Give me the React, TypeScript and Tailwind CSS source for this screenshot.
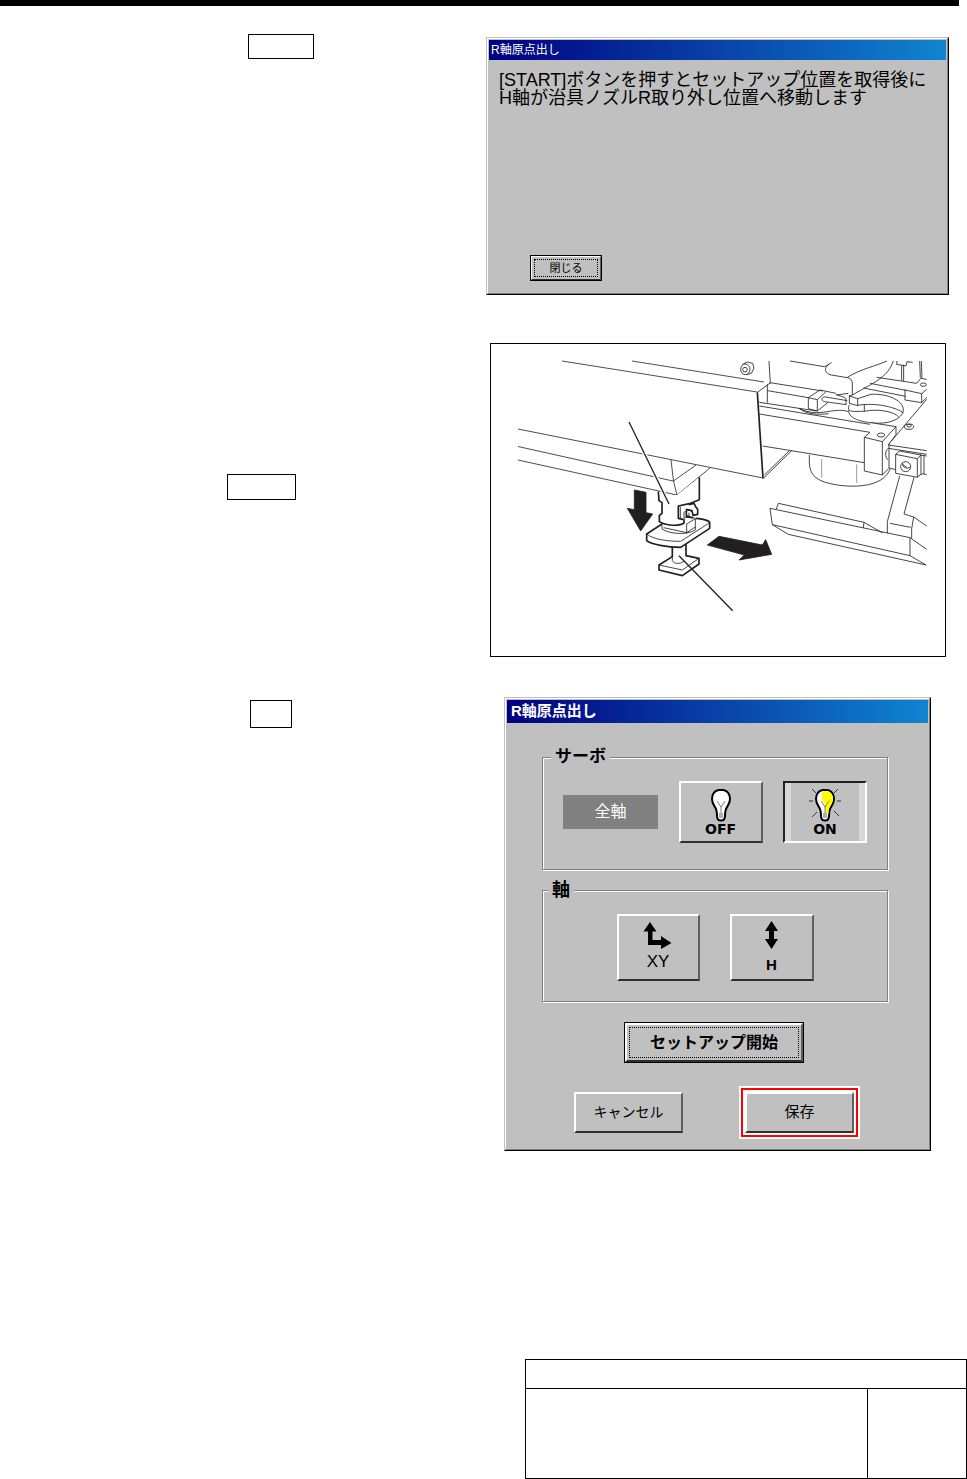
import type { ReactNode } from "react";

const bevel =
  "border-t-white border-l-white border-r-[#606060] border-b-[#303030] bg-[#c0c0c0] text-black";

const groupBox =
  "min-w-0 border border-[#808080] shadow-[1px_1px_0_#fff,inset_1px_1px_0_#fff]";

function DialogWindow({
  title,
  titleClass,
  className,
  children,
}: {
  title: string;
  titleClass: string;
  className: string;
  children: ReactNode;
}) {
  return (
    <section
      aria-label={title}
      className={`flex flex-col border border-t-[#c0c0c0] border-l-[#c0c0c0] border-r-black border-b-black bg-[#c0c0c0] ${className}`}
    >
      <div className="flex grow flex-col border border-t-white border-l-white border-r-[#808080] border-b-[#808080] p-px">
        <h2
          className={`flex items-center bg-linear-to-r/srgb from-[#000080] to-[#1084d0] text-white ${titleClass}`}
        >
          {title}
        </h2>
        {children}
      </div>
    </section>
  );
}

function KeyBox({ className }: { className: string }) {
  return <div className={`border border-black ${className}`} />;
}

function Bulb({ lit }: { lit: boolean }) {
  return (
    <svg width="36" height="34" viewBox="0 0 36 34" fill="none" aria-hidden="true">
      <path
        d="M15.500 2h5c4 1 6.500 4.500 6.500 9c0 4.500-2.500 6.500-4 10c-.8 2-1 4-1 7c0 3-1.500 4.500-4 4.500s-4-1.500-4-4.500c0-3-.2-5-1-7c-1.500-3.500-4-5.500-4-10c0-4.500 2.500-8 6.500-9z"
        fill="#fff"
        stroke="#000"
        strokeWidth="2"
      />
      {lit && (
        <path d="M15 4l2-1h3.500c3.500 1 5.500 4 5.500 8c0 4-3 6.500-4.500 11v4h-3.500v-9l-3-6z" fill="#ff0" />
      )}
      <path d="M14 13l4 6l4-6M18 18v7" stroke="#808080" strokeWidth="1" />
      <path d="M16 25h4v5h-4z" fill="#b0b0b0" />
      {lit && (
        <path
          d="M5 1l4 4M31 1l-4 4M2 13h4M30 13h4M5 29l5-5M32 28l-5-5"
          stroke="#333"
          strokeWidth="1"
        />
      )}
    </svg>
  );
}

function MachineDrawing() {
  return (
    <svg
      viewBox="491 344 454 312"
      className="block h-auto w-full"
      role="img"
      aria-label="H軸 治具ノズル"
      fill="none"
      stroke="#231f20"
      strokeWidth="0.8"
      strokeLinejoin="round"
    >
      <path d="M562 361L757 392M632 361L764 382M518 429L763 478M518 446.500L673 481M518 460L677 495" />
      <path d="M671 460l2.500 21l3.500 14l33-27M673.500 481L696 465" />
      <g transform="translate(720 340) scale(.33333)" strokeWidth="2.500">
        <path d="M147 63L151 130M112 157l40-29M142 133v55M118 187l172 26M150 128l158 25M143 152l122 21" />
        <path d="M112 157L129 415" strokeWidth="5" />
        <path d="M128 318L433 368M215 332L130 415M207 333L133 405" />
        <path d="M265 173l27 6v34l-27-7zM265 173l35-23l48 10M292 179l26-24M292 213l31-25" />
        <path d="M382 182l-65-11c-14-2-14 12-4 14l66 9M350 165l35-5M378 176v18M348 164c12 4 24 6 30 12" />
        <path d="M388 168l25 8v21l-25-7zM413 176l40-13c56-3 99 22 97 48c-3 25-40 42-90 38c-48-4-75-18-74-38M412 196c60-10 120 8 138 23M388 195c-12 25 18 18 45 19c40-9 91 1 103 17M433 192v22" />
        <path d="M236 205c52 26 88 5 123 6c9 0 17 1 27 4M118 198L450 253M118 222l332 55M240 207c20 15 50 18 86 14" />
        <path d="M210 63l103 17l14-6M335 68c-24 10-25 32-1 37l48 8c10 2 15 7 15 18v34l55-31c38-22 56-38 68-71M382 112c40-25 80-32 119-49M397 165l-10 3" />
        <path d="M450 130l108 21M470 112l120 18l12-15l18 3M430 144l127 25M555 150l50 11l15-13M555 150v30l50 8v-27M605 188l15-16" />
        <ellipse cx="610" cy="134" rx="9" ry="5" />
        <path d="M545 76v46M551 74v49M599 63l2 50M604 63l2 51M531 63l-1 10l28 5l3-13l17 2" />
        <path d="M620 178L505 314" />
        <ellipse cx="567" cy="260" rx="14" ry="8" />
        <ellipse cx="567" cy="257" rx="7" ry="4" />
        <path d="M450 277l-17 15l54 13v100l-54-12V292M487 305l41-45l-75-12M487 405l20-20V312l21-28v-24" fill="#fff" />
        <ellipse cx="483" cy="285" rx="11" ry="6" />
        <path d="M268 345v25c2 33 18 46 45 56c50 16 112 16 147 4c25-9 39-19 51-43" />
        <path d="M305 357v56M410 373v56" stroke="#888" />
        <path d="M505 315l115 17M505 325l115 18M505 325c-10 5-11 29-1 34M508 384l19 5M600 345l20 3M612 346v56l8 2M597 405l15-4" />
        <path d="M527 343l11-10l65 12v56l-10 11l-66-12zM527 343l65 13v55M592 356l11-11" fill="#fff" />
        <circle cx="557" cy="380" r="15" />
        <path d="M548 370c0 13 9 16 22 13M547 373l13 9" />
        <path d="M68 73l14-7l16 4l4 14l-7 15l-14 5" />
        <ellipse cx="76" cy="88" rx="14" ry="16" fill="#fff" />
        <circle cx="75" cy="89" r="7" />
      </g>
      <g transform="translate(760 440) scale(.33333)" strokeWidth="2.500">
        <path d="M419 108L382 245v35M462 112l-30 110l29 9l39 27M461 231l-6 35v28M390 250l62 12" />
        <path d="M30 205l420 88l50 35M30 205l7 49l413 93v-54M49 207l6-17l257 57l56 32M312 247l-2 17M37 254l48 29l413 92l-48-28" />
      </g>
      <g transform="translate(610 460) scale(.33333)" strokeWidth="2.500">
        <path d="M73 90l35 7v61l20 4l-36 51l-40-68l21 4zM292 255l35-26l130 26l10-16l18 44l-98 17l16-15z" fill="#231f20" />
        <path d="M187 290l-40 25v15l70 17l50-35v-17l-39-8" fill="#fff" strokeWidth="5" />
        <path d="M147 315l70 15l50-35" />
        <path d="M187 250v53c8 9 28 9 40 0v-58z" fill="#fff" stroke="none" />
        <path d="M187 260v32M228 252v37" strokeWidth="5" />
        <path d="M187 290v12c6 10 22 11 35 2" />
        <path d="M156 192l-46 30v20c14 11 60 20 102 20l87-57v-19c-12-9-25-9-41-11" fill="#fff" strokeWidth="5" />
        <path d="M110 222c20 16 60 22 102 22l87-56" />
        <path d="M156 190v17c20 14 72 20 100 3v-35l-26-9" fill="#fff" />
        <path d="M230 192v28M161 203l69 15l26-17M230 192l26-16" />
        <path d="M145 105l2 17l9 6v32l-8 7v18c18 12 60 15 74 4v-10l-17-4v-37l33-7l30-12V52l-67 53z" fill="#fff" stroke="none" />
        <path d="M145 95l2 27l9 6v32l-8 7v18c18 12 60 15 74 4v-10l-17-4v-37l33-7l30-12V52" strokeWidth="5" />
        <path d="M211 140v35M222 157v17l15-3v-13M222 157l13-8l10 6" />
        <path d="M236 134l16-4l5 10l6 8v15l-14 3l-3-14l-19-4M229 152v17l20 5" strokeWidth="5" />
        <path d="M207 287l161 165" strokeWidth="4" />
      </g>
      <path d="M629 422L669 504" stroke="#fff" strokeWidth="4" />
      <path d="M629 422L669 504" strokeWidth="1.300" />
    </svg>
  );
}

export default function App() {
  return (
    <main className="flex flex-col bg-white font-['Liberation_Sans','Noto_Sans_CJK_JP',sans-serif] text-black">
      <header className="mr-2 h-1.5 bg-black" />

      <div className="mt-7 grid grid-cols-[486fr_481fr]">
        <div className="pl-[248px]">
          <KeyBox className="h-[25px] w-[66px]" />
        </div>
        <DialogWindow
          title="R軸原点出し"
          titleClass="h-5 px-0.5 text-[12px]"
          className="mt-[3px] mr-[18px] min-h-[258px]"
        >
          <p className="mt-[11px] pl-2.5 text-[18px] leading-[18px]">
            [START]ボタンを押すとセットアップ位置を取得後に
            <br />
            H軸が治具ノズルR取り外し位置へ移動します
          </p>
          <div className="mt-auto mb-[11px] pl-[41px]">
            <button type="button" className="block border border-black">
              <span className={`block border p-0.5 ${bevel}`}>
                <span className="flex h-[18px] w-16 items-center justify-center border border-dotted border-black text-[11px] leading-none">
                  閉じる
                </span>
              </span>
            </button>
          </div>
        </DialogWindow>
      </div>

      <div className="mt-12 grid grid-cols-[486fr_481fr]">
        <div className="pt-[131px] pl-[227px]">
          <KeyBox className="h-[26px] w-[69px]" />
        </div>
        <figure className="mr-[21px] ml-1 border border-black">
          <MachineDrawing />
        </figure>
      </div>

      <div className="mt-10 grid grid-cols-[486fr_481fr]">
        <div className="pt-[3px] pl-[250px]">
          <KeyBox className="h-7 w-[42px]" />
        </div>
        <DialogWindow
          title="R軸原点出し"
          titleClass="h-[23px] px-1 text-[15px] font-bold"
          className="mr-9 ml-[18px] min-h-[454px]"
        >
          <div className="flex flex-col pr-[40px] pl-[35px]">
            <fieldset className={`mt-[25px] h-[122px] px-5 ${groupBox}`}>
              <legend className="-ml-3 bg-[#c0c0c0] px-1 text-[17px] leading-[18px] font-bold">
                サーボ
              </legend>
              <div className="mt-[15px] flex items-center justify-between">
                <span className="flex h-[34px] w-[95px] items-center justify-center bg-[#808080] text-[16px] text-white">
                  全軸
                </span>
                <button
                  type="button"
                  className={`flex h-[62px] w-[84px] flex-col items-center border-2 pt-[5px] font-['DejaVu_Sans',sans-serif] text-[14px] leading-[14px] font-bold ${bevel}`}
                >
                  <Bulb lit={false} />
                  OFF
                </button>
                <button
                  type="button"
                  aria-pressed="true"
                  className="flex h-[62px] w-[84px] justify-between border-2 border-t-[#202020] border-r-white border-b-white border-l-[#202020] bg-[#c0c0c0] font-['DejaVu_Sans',sans-serif] text-[14px] leading-[14px] font-bold"
                >
                  <span className="h-full w-1.5 bg-[#d8d8d8]" />
                  <span className="flex h-full flex-col items-center pt-[5px]">
                    <Bulb lit />
                    ON
                  </span>
                  <span className="h-full w-1.5 bg-[#d8d8d8]" />
                </button>
              </div>
            </fieldset>

            <fieldset className={`mt-[11px] h-[121px] ${groupBox}`}>
              <legend className="ml-[5px] bg-[#c0c0c0] px-1 text-[18px] leading-[18px] font-bold">
                軸
              </legend>
              <div className="mt-[15px] flex justify-center gap-[30px]">
                <button
                  type="button"
                  className={`flex h-[67px] w-[83px] flex-col items-center border-2 pt-1.5 text-[17px] leading-6 ${bevel}`}
                >
                  <svg width="30" height="28" viewBox="0 0 30 28" aria-hidden="true">
                    <path d="M7 0l6.500 9.500H9.500V18H18v-4l10.500 7L18 27v-4H5V9.500H.5z" />
                  </svg>
                  XY
                </button>
                <button
                  type="button"
                  className={`flex h-[67px] w-[84px] flex-col items-center gap-1.5 border-2 pt-[5px] text-[15px] leading-5 font-bold ${bevel}`}
                >
                  <svg width="13" height="28" viewBox="0 0 13 28" aria-hidden="true">
                    <path d="M6.500 0L13 10H9v8h4L6.500 28L0 18h4v-8H0z" />
                  </svg>
                  H
                </button>
              </div>
            </fieldset>
          </div>

          <button type="button" className="mt-5 mr-[7px] block self-center border border-black">
            <span className={`block border-2 p-0.5 ${bevel}`}>
              <span className="flex h-[31px] w-[170px] items-center justify-center border border-dotted border-black text-[16px] leading-none font-bold">
                セットアップ開始
              </span>
            </span>
          </button>

          <div className="mt-[23px] mr-px flex items-center justify-center gap-14">
            <button type="button" className={`h-[41px] w-[109px] border-2 text-[14px] ${bevel}`}>
              キャンセル
            </button>
            <div className="border-2 border-white">
              <div className="border-2 border-[#f00] bg-white p-0.5">
                <button
                  type="button"
                  className={`block h-[41px] w-[109px] border-2 text-[15px] ${bevel}`}
                >
                  保存
                </button>
              </div>
            </div>
          </div>
        </DialogWindow>
      </div>

      <footer className="mt-52 grid grid-cols-[525fr_442fr]">
        <table className="col-start-2 w-full table-fixed border-collapse">
          <colgroup>
            <col />
            <col className="w-[99px]" />
          </colgroup>
          <tbody>
            <tr className="h-[29px]">
              <td colSpan={2} className="border border-black" />
            </tr>
            <tr className="h-[90px]">
              <td className="border border-black" />
              <td className="border border-black" />
            </tr>
          </tbody>
        </table>
      </footer>
    </main>
  );
}
